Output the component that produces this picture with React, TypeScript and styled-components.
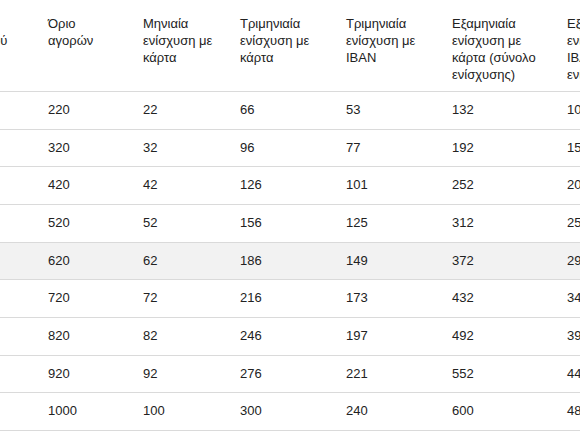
import React, { useLayoutEffect, useRef } from "react";
import styled, { createGlobalStyle, css } from "styled-components";

const GlobalStyle = createGlobalStyle`
    html, body {
        margin: 0;
        padding: 0;
        background: #ffffff;
    }

    body {
        font-family: "Liberation Sans", Arial, sans-serif;
        font-size: 13px;
        color: #222222;
    }
`;

const ScrollArea = styled.div`
    width: 100vw;
    overflow-x: auto;
    scrollbar-width: none;

    &::-webkit-scrollbar {
        display: none;
    }
`;

const Table = styled.table`
    border-collapse: collapse;
    table-layout: fixed;
    width: 743px;
`;

const HeadCell = styled.th`
    padding: 15px 16px 8px 8px;
    font-weight: normal;
    text-align: left;
    vertical-align: top;
    line-height: 17px;
    border-bottom: 1px solid #dadada;
`;

const Row = styled.tr<{ $highlighted?: boolean }>`
    ${props => props.$highlighted && css`
        background-color: #f2f2f2;
    `}
`;

const Cell = styled.td`
    padding: 10px 16px 10px 8px;
    line-height: 16.67px;
    text-align: left;
    vertical-align: middle;
    border-bottom: 1px solid #dadada;
`;

const columns = [
    { title: "Μέλη νοικοκυριού", width: 109 },
    { title: "Όριο αγορών", width: 95 },
    { title: "Μηνιαία ενίσχυση με κάρτα", width: 97 },
    { title: "Τριμηνιαία ενίσχυση με κάρτα", width: 106 },
    { title: "Τριμηνιαία ενίσχυση με IBAN", width: 106 },
    { title: "Εξαμηνιαία ενίσχυση με κάρτα (σύνολο ενίσχυσης)", width: 115 },
    { title: "Εξαμηνιαία ενίσχυση με IBAN (σύνολο ενίσχυσης)", width: 115 },
];

const rows = [
    ["1", "220", "22", "66", "53", "132", "106"],
    ["2", "320", "32", "96", "77", "192", "154"],
    ["3", "420", "42", "126", "101", "252", "202"],
    ["4", "520", "52", "156", "125", "312", "250"],
    ["5", "620", "62", "186", "149", "372", "298"],
    ["6", "720", "72", "216", "173", "432", "346"],
    ["7", "820", "82", "246", "197", "492", "394"],
    ["8", "920", "92", "276", "221", "552", "442"],
    ["9+", "1000", "100", "300", "240", "600", "480"],
];

const HIGHLIGHTED_ROW = 4;

const App = () => {
    const scrollRef = useRef<HTMLDivElement>(null);

    // the table is shown scrolled sideways, first column mostly out of view
    useLayoutEffect(() => {
        if (scrollRef.current) {
            scrollRef.current.scrollLeft = 69;
        }
    }, []);

    return (
        <>
            <GlobalStyle />
            <ScrollArea ref={scrollRef}>
                <Table>
                    <colgroup>
                        {columns.map(col => (
                            <col key={col.title} style={{ width: col.width }} />
                        ))}
                    </colgroup>
                    <thead>
                        <tr>
                            {columns.map(col => (
                                <HeadCell key={col.title}>{col.title}</HeadCell>
                            ))}
                        </tr>
                    </thead>
                    <tbody>
                        {rows.map((row, i) => (
                            <Row key={row[0]} $highlighted={i === HIGHLIGHTED_ROW}>
                                {row.map((value, j) => (
                                    <Cell key={j}>{value}</Cell>
                                ))}
                            </Row>
                        ))}
                    </tbody>
                </Table>
            </ScrollArea>
        </>
    );
};

export default App;
